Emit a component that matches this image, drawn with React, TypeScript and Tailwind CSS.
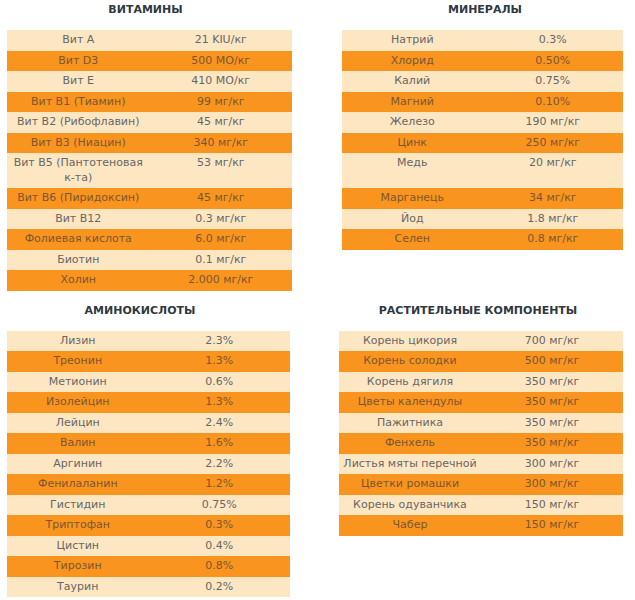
type Row = { name: React.ReactNode; value: string; tall?: boolean };

const vitamins: Row[] = [
  { name: 'Вит A', value: '21 KIU/кг' },
  { name: 'Вит D3', value: '500 МО/кг' },
  { name: 'Вит E', value: '410 МО/кг' },
  { name: 'Вит B1 (Тиамин)', value: '99 мг/кг' },
  { name: 'Вит B2 (Рибофлавин)', value: '45 мг/кг' },
  { name: 'Вит B3 (Ниацин)', value: '340 мг/кг' },
  {
    name: (
      <>
        Вит B5 (Пантотеновая
        <br />
        к-та)
      </>
    ),
    value: '53 мг/кг',
    tall: true,
  },
  { name: 'Вит B6 (Пиридоксин)', value: '45 мг/кг' },
  { name: 'Вит B12', value: '0.3 мг/кг' },
  { name: 'Фолиевая кислота', value: '6.0 мг/кг' },
  { name: 'Биотин', value: '0.1 мг/кг' },
  { name: 'Холин', value: '2.000 мг/кг' },
];

const minerals: Row[] = [
  { name: 'Натрий', value: '0.3%' },
  { name: 'Хлорид', value: '0.50%' },
  { name: 'Калий', value: '0.75%' },
  { name: 'Магний', value: '0.10%' },
  { name: 'Железо', value: '190 мг/кг' },
  { name: 'Цинк', value: '250 мг/кг' },
  { name: 'Медь', value: '20 мг/кг', tall: true },
  { name: 'Марганець', value: '34 мг/кг' },
  { name: 'Йод', value: '1.8 мг/кг' },
  { name: 'Селен', value: '0.8 мг/кг' },
];

const aminos: Row[] = [
  { name: 'Лизин', value: '2.3%' },
  { name: 'Треонин', value: '1.3%' },
  { name: 'Метионин', value: '0.6%' },
  { name: 'Изолейцин', value: '1.3%' },
  { name: 'Лейцин', value: '2.4%' },
  { name: 'Валин', value: '1.6%' },
  { name: 'Аргинин', value: '2.2%' },
  { name: 'Фенилаланин', value: '1.2%' },
  { name: 'Гистидин', value: '0.75%' },
  { name: 'Триптофан', value: '0.3%' },
  { name: 'Цистин', value: '0.4%' },
  { name: 'Тирозин', value: '0.8%' },
  { name: 'Таурин', value: '0.2%' },
];

const plants: Row[] = [
  { name: 'Корень цикория', value: '700 мг/кг' },
  { name: 'Корень солодки', value: '500 мг/кг' },
  { name: 'Корень дягиля', value: '350 мг/кг' },
  { name: 'Цветы календулы', value: '350 мг/кг' },
  { name: 'Пажитника', value: '350 мг/кг' },
  { name: 'Фенхель', value: '350 мг/кг' },
  { name: 'Листья мяты перечной', value: '300 мг/кг' },
  { name: 'Цветки ромашки', value: '300 мг/кг' },
  { name: 'Корень одуванчика', value: '150 мг/кг' },
  { name: 'Чабер', value: '150 мг/кг' },
];

function Section({
  title,
  rows,
  className,
  titleClass,
}: {
  title: string;
  rows: Row[];
  className: string;
  titleClass: string;
}) {
  return (
    <div className={className}>
      <h3 className={'h-[30px] text-center text-[11px] font-bold leading-[20px] text-[#2f3942] ' + titleClass}>
        {title}
      </h3>
      <div>
        {rows.map((r, i) => (
          <div
            key={i}
            className={
              'grid grid-cols-2 text-center text-[11px] leading-[14.5px] ' +
              (i % 2 === 0 ? 'bg-[#fde7c3] text-[#666]' : 'bg-[#f9951f] text-[#7d5630]') +
              (r.tall ? ' h-[35px]' : ' h-[20.5px]')
            }
          >
            <div className="px-[2px] py-[3px]">{r.name}</div>
            <div className="px-[2px] py-[3px]">{r.value}</div>
          </div>
        ))}
      </div>
    </div>
  );
}

export default function App() {
  return (
    <div className="h-[600px] w-[635px] bg-white font-['DejaVu_Sans',sans-serif]">
      <div className="flex items-start">
        <Section title="ВИТАМИНЫ" rows={vitamins} className="ml-[7px] w-[285px]" titleClass="pr-[8px]" />
        <Section title="МИНЕРАЛЫ" rows={minerals} className="ml-[50px] w-[281px]" titleClass="pl-[5px]" />
      </div>
      <div className="mt-[10px] flex items-start">
        <Section title="АМИНОКИСЛОТЫ" rows={aminos} className="ml-[7px] w-[283px]" titleClass="pr-[17px]" />
        <Section
          title="РАСТИТЕЛЬНЫЕ КОМПОНЕНТЫ"
          rows={plants}
          className="ml-[49px] w-[284px]"
          titleClass="pr-[6px]"
        />
      </div>
    </div>
  );
}
